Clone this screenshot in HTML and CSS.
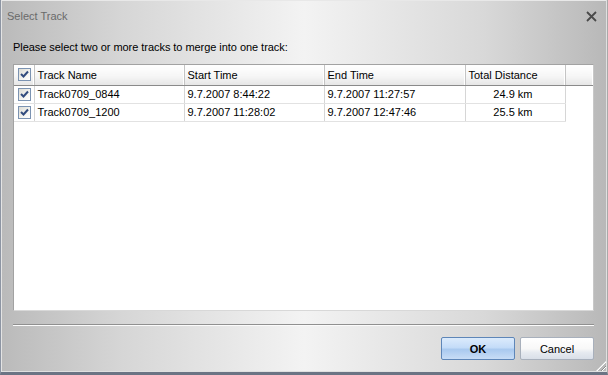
FILE: index.html
```html
<!DOCTYPE html>
<html lang="en">
<head>
    <meta charset="UTF-8">
    <title>Select Track</title>
    <link rel="stylesheet" href="styles.css">
</head>
<body>
    <div class="window">
        <div class="titlebar">
            <span class="title">Select Track</span>
            <span class="close">
                <svg width="13" height="13" viewBox="0 0 13 13">
                    <path d="M2 2 L11 11 M11 2 L2 11" stroke="#4a4a4a" stroke-width="1.8"/>
                </svg>
            </span>
        </div>

        <div class="content">
            <p class="prompt">Please select two or more tracks to merge into one track:</p>

            <div class="list">
                <table class="tracks">
                    <thead>
                        <tr>
                            <th class="col-check"><span class="check"></span></th>
                            <th class="col-name">Track Name</th>
                            <th class="col-start">Start Time</th>
                            <th class="col-end">End Time</th>
                            <th class="col-dist">Total Distance</th>
                            <th class="col-fill"></th>
                        </tr>
                    </thead>
                    <tbody>
                        <tr>
                            <td class="col-check"><span class="check"></span></td>
                            <td>Track0709_0844</td>
                            <td>9.7.2007 8:44:22</td>
                            <td>9.7.2007 11:27:57</td>
                            <td class="num">24.9 km</td>
                            <td class="col-fill"></td>
                        </tr>
                        <tr>
                            <td class="col-check"><span class="check"></span></td>
                            <td>Track0709_1200</td>
                            <td>9.7.2007 11:28:02</td>
                            <td>9.7.2007 12:47:46</td>
                            <td class="num">25.5 km</td>
                            <td class="col-fill"></td>
                        </tr>
                    </tbody>
                </table>
            </div>
        </div>

        <div class="separator"></div>

        <div class="buttons">
            <button class="btn btn-ok">OK</button>
            <button class="btn btn-cancel">Cancel</button>
        </div>

        <div class="grip"></div>
    </div>
</body>
</html>
```

FILE: styles.css
```css
* {
    box-sizing: border-box;
}

body {
    margin: 0;
    font-family: "Liberation Sans", Arial, sans-serif;
    font-size: 11px;
    color: #000;
}

.window {
    position: relative;
    width: 608px;
    height: 375px;
    display: flex;
    flex-direction: column;
    background: linear-gradient(to right, #bababa 0%, #d6d6d6 20%, #f3f3f3 50%, #d8d8d8 80%, #b8b8b8 100%);
    border-left: 1px solid #8d95a3;
    border-right: 1px solid #a9a9a9;
    border-bottom: 3px solid #6b7484;
    box-shadow: inset 1px 0 0 #e4e4e4, inset -1px 0 0 #e0e0e0, inset 0 1px 0 #e8e8e8, inset 0 -1px 0 #e0e0e0;
}

/* barra de titulo */
.titlebar {
    height: 34px;
    display: flex;
    justify-content: space-between;
    align-items: flex-start;
    padding: 10px 9px 0 6px;
}

.title {
    color: #6a6a6a;
    font-size: 11px;
    line-height: 13px;
}

.close {
    display: block;
    width: 13px;
    height: 13px;
}

.content {
    flex: 1;
    display: flex;
    flex-direction: column;
    padding: 0 13px 0 12px;
}

.prompt {
    margin: 7px 0 10px;
    line-height: 13px;
    letter-spacing: -0.05px;
}

/* lista de tracks */
.list {
    height: 247px;
    background: #fff;
    border: 1px solid #a2a2a2;
    border-right-color: #c8c8c8;
    border-bottom-color: #d8d8d8;
}

.tracks {
    border-collapse: collapse;
    width: 100%;
    table-layout: fixed;
}

.tracks th {
    height: 20px;
    padding: 0 3px;
    text-align: left;
    font-weight: normal;
    background: linear-gradient(to bottom, #ffffff 0%, #f6f6f6 55%, #e6e6e6 100%);
    border-bottom: 1px solid #8a8a8a;
    border-right: 1px solid #c4c4c4;
    box-shadow: inset -1px 0 0 #ffffff;
    white-space: nowrap;
}

.tracks th.col-fill {
    border-right: none;
}

.tracks td {
    height: 18px;
    padding: 0 3px;
    border-bottom: 1px solid #e2e2e2;
    border-right: 1px solid #d6d6d6;
    white-space: nowrap;
}

.tracks td.col-fill {
    border: none;
}

.tracks .col-check {
    width: 20px;
    padding: 0 0 0 4px;
}

.tracks .col-name {
    width: 150px;
}

.tracks .col-start {
    width: 140px;
}

.tracks .col-end {
    width: 141px;
}

.tracks .col-dist {
    width: 100px;
}

.tracks td.num {
    text-align: right;
    padding-right: 32px;
}

.check {
    display: block;
    width: 13px;
    height: 13px;
    border: 1px solid #7b93b2;
    background-image: url("data:image/svg+xml,%3Csvg xmlns='http://www.w3.org/2000/svg' width='11' height='11'%3E%3Cpath d='M2 5 L4.5 7.5 L9 2.5' fill='none' stroke='%23324c7e' stroke-width='2'/%3E%3C/svg%3E"), linear-gradient(135deg, #dcdcd6 0%, #f4f4f0 60%, #ffffff 100%);
    background-repeat: no-repeat;
}

/* rodape */
.separator {
    height: 2px;
    margin: 0 13px 0 12px;
    border-top: 1px solid #909090;
    border-bottom: 1px solid #fbfbfb;
}

.buttons {
    height: 46px;
    display: flex;
    justify-content: flex-end;
    gap: 5px;
    padding: 11px 13px 0 0;
}

.btn {
    width: 74px;
    height: 23px;
    font-family: "Liberation Sans", Arial, sans-serif;
    font-size: 11px;
    border-radius: 2px;
    padding: 0;
}

.btn-ok {
    font-weight: bold;
    border: 1px solid #5e86b8;
    background: linear-gradient(to bottom, #dcebfc 0%, #c4dcf8 45%, #a9c9ef 55%, #c8ddf6 100%);
}

.btn-cancel {
    border: 1px solid #a8b0bc;
    background: linear-gradient(to bottom, #ffffff 0%, #f8f8f8 50%, #e6eaf0 70%, #d9dfe8 100%);
}

.grip {
    position: absolute;
    right: 1px;
    bottom: 1px;
    width: 10px;
    height: 10px;
    background: repeating-linear-gradient(135deg, transparent 0 2px, #8c8c8c 2px 3px, #ffffff 3px 4px);
    clip-path: polygon(100% 0, 100% 100%, 0 100%);
}
```
